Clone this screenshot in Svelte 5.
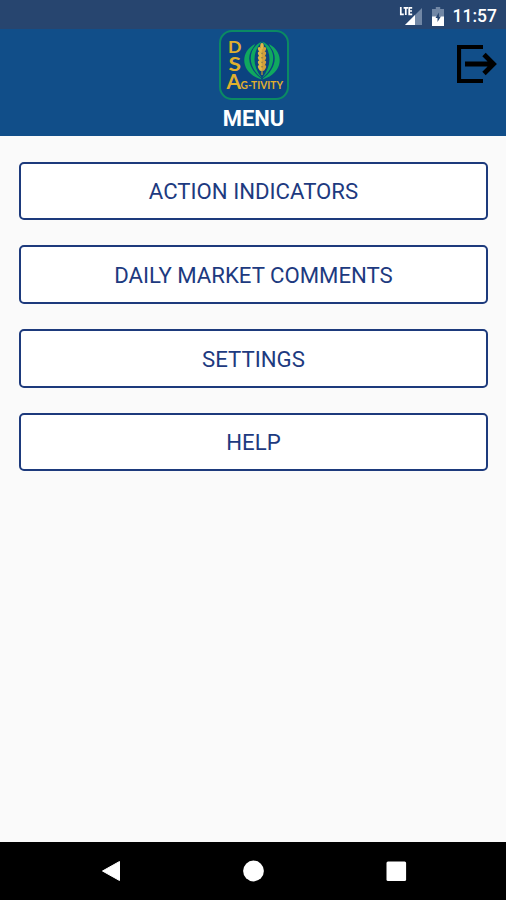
<script lang="ts">
	const items = ['Action Indicators', 'Daily Market Comments', 'Settings', 'Help'];

	// grain pairs on the wheat ear, top to bottom
	const grains = [20, 24.5, 29, 33.5, 38];
</script>

<div class="screen">
	<div class="status-bar">
		<svg class="signal" viewBox="0 0 24 20" aria-hidden="true">
			<path d="M23 2v17H6z" fill="#7187a5" />
			<path d="M16 9v10H6z" fill="#fff" />
			<path d="M1.8 1v7.3h3M4.6 1.8H9M6.8 1.8V9M13.2 1.8h-3v6.5h3M10.2 5H13" fill="none" stroke="#fff" stroke-width="1.7" />
		</svg>
		<svg class="battery" viewBox="0 0 12 19" aria-hidden="true">
			<path d="M3.8 0h4.4v2H12v8H0V2h3.8z" fill="#7187a5" />
			<path d="M0 9.5h12V19H0z" fill="#fff" />
			<path d="M6.9 5.5 3.5 11h2v4l3.4-5.5h-2z" fill="#27456f" />
		</svg>
		<span class="clock">11:57</span>
	</div>

	<header>
		<svg class="logo" viewBox="0 0 70 70" role="img" aria-label="DSA Ag-tivity">
			<rect x="1" y="1" width="68" height="68" rx="12" fill="#0b4380" stroke="#0b8a63" stroke-width="2" />
			<g fill="#10a85f">
				<path d="M36 14C20.500 22 21 43 42.500 49.500L38 38 32 24z" />
				<path d="M50 14C65.500 22 65 43 43.500 49.500L48 38 54 24z" />
			</g>
			<path d="M43 11C25.500 19 26.500 38 43 49 59.500 38 60.500 19 43 11z" fill="#0b4380" />
			<g fill="#10a85f">
				<path d="M43 11.500C28 18 28 37 42.800 48 33.500 36 32.500 23 43 11.500z" />
				<path d="M43 11.500C58 18 58 37 43.200 48 52.500 36 53.500 23 43 11.500z" />
			</g>
			<path d="M43 17v28" stroke="#c99b35" stroke-width="1.2" />
			<ellipse cx="43" cy="16.5" rx="1.8" ry="3.4" fill="#e2b846" />
			{#each grains as y}
				<ellipse cx="41.1" cy={y} rx="1.7" ry="3.2" transform={`rotate(-28 41.1 ${y})`} fill="#e2b846" />
				<ellipse cx="44.9" cy={y} rx="1.7" ry="3.2" transform={`rotate(28 44.9 ${y})`} fill="#d2a03a" />
			{/each}
			<g class="logo-text">
				<text x="9" y="22.8" font-size="17.5" textLength="13.5" lengthAdjust="spacingAndGlyphs">D</text>
				<text x="9.5" y="41" font-size="18.5" textLength="12.5" lengthAdjust="spacingAndGlyphs">S</text>
				<text x="7.5" y="59" font-size="20.5" textLength="14.5" lengthAdjust="spacingAndGlyphs">A</text>
				<text x="21.5" y="59" font-size="10.5" textLength="42.5" lengthAdjust="spacingAndGlyphs">G-TIVITY</text>
			</g>
		</svg>
		<h1>MENU</h1>
		<button class="logout" aria-label="Log out">
			<svg viewBox="0 0 40 38" aria-hidden="true">
				<path d="M26 2H2v34h24" fill="none" stroke="#000" stroke-width="4.2" />
				<path d="M8 19h28M27 9.5l9.5 9.5-9.5 9.5" fill="none" stroke="#000" stroke-width="4.8" />
			</svg>
		</button>
	</header>

	<main>
		{#each items as item}
			<button class="menu-item">{item}</button>
		{/each}
	</main>

	<nav>
		<svg viewBox="0 0 22 22" aria-hidden="true"><path d="M19.5 1.5v19L2.5 11z" fill="#fff" stroke="#fff" stroke-linejoin="round" /></svg>
		<svg viewBox="0 0 22 22" aria-hidden="true"><circle cx="10.5" cy="11" r="10.4" fill="#fff" /></svg>
		<svg viewBox="0 0 22 22" aria-hidden="true"><rect x="1.5" y="1.5" width="19.6" height="19.5" rx="1.5" fill="#fff" /></svg>
	</nav>
</div>

<style>
	:global(body) {
		margin: 0;
	}

	.screen {
		display: flex;
		flex-direction: column;
		width: 100%;
		height: 100vh;
		background: #fafafa;
		font-family: Roboto, 'Liberation Sans', sans-serif;
	}

	button {
		margin: 0;
		padding: 0;
		font: inherit;
	}

	.status-bar {
		display: flex;
		align-items: center;
		justify-content: flex-end;
		box-sizing: border-box;
		height: 29px;
		padding: 3px 9px 0 0;
		background: #27456f;
		color: #fff;
	}

	.signal {
		width: 24px;
		height: 20px;
		margin-right: 9px;
	}

	.battery {
		width: 12px;
		height: 19px;
		margin-right: 9px;
	}

	.clock {
		font-size: 17.5px;
		font-weight: 500;
		line-height: 25px;
	}

	header {
		position: relative;
		display: flex;
		flex-direction: column;
		align-items: center;
		height: 107px;
		background: #114e89;
	}

	.logo {
		width: 70px;
		height: 70px;
		margin: 0.5px 0 0 1px;
	}

	.logo-text {
		fill: #e0b02e;
		font-family: Lato, 'Open Sans', sans-serif;
		font-weight: 700;
	}

	h1 {
		margin: 5px 0 0;
		padding-left: 1px;
		color: #fff;
		font-size: 22px;
		font-weight: 700;
		line-height: 28px;
	}

	.logout {
		position: absolute;
		top: 16px;
		right: 9px;
		width: 40px;
		height: 38px;
		border: 0;
		background: none;
	}

	.logout svg {
		display: block;
	}

	main {
		display: flex;
		flex: 1;
		flex-direction: column;
		gap: 25px;
		padding: 25.5px 18px 0 19px;
	}

	.menu-item {
		box-sizing: border-box;
		height: 58.7px;
		padding-top: 1px;
		border: 2px solid #1d3a7c;
		border-radius: 5px;
		background: #fff;
		color: #1d3a80;
		font-size: 22.2px;
		font-weight: 400;
		text-transform: uppercase;
	}

	nav {
		display: flex;
		align-items: center;
		justify-content: space-between;
		box-sizing: border-box;
		height: 58px;
		padding: 0 99px 0 100px;
		background: #000;
	}

	nav svg {
		width: 22px;
		height: 22px;
	}
</style>
